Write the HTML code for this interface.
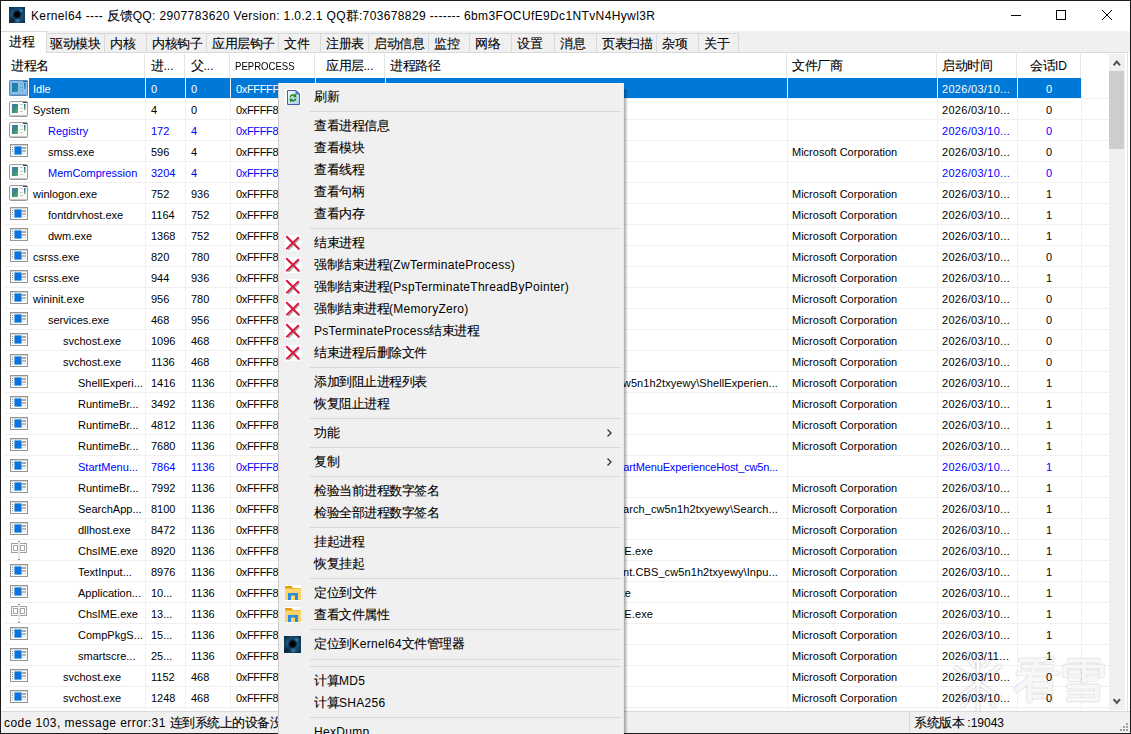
<!DOCTYPE html>
<html><head><meta charset="utf-8"><style>
*{box-sizing:border-box}
html,body{margin:0;padding:0}
body{width:1131px;height:734px;overflow:hidden;position:relative;background:#fff;font-family:"Liberation Sans",sans-serif;color:#000}
.a{position:absolute}
.t{position:absolute;white-space:nowrap;font-size:11px;line-height:21px;height:21px;margin-top:1px}
.hd{position:absolute;white-space:nowrap;font-size:12px;line-height:24px;top:54px}
.tab{position:absolute;white-space:nowrap;font-size:12px;line-height:20px;top:33px;height:20px;background:#f0f0f0;border:1px solid #d9d9d9;border-bottom:none;text-align:center}
.mi{position:absolute;left:314px;white-space:nowrap;font-size:12px;line-height:22px;height:22px}
.cj{font-size:12.5px;letter-spacing:-0.5px;-webkit-text-stroke:0.1px currentColor}
.ms{position:absolute;left:310px;width:311px;height:1px;background:#d7d7d7}
</style></head><body>

<div class="a" style="left:0;top:0;width:1131px;height:734px;border:1px solid #1b1b1b"></div>
<div class="a" style="left:9px;top:7px;width:16px;height:16px;background:radial-gradient(circle at 50% 47%,#000 0,#000 2.2px,rgba(0,0,0,0.6) 3.5px,rgba(0,0,0,0) 5px),radial-gradient(circle at 75% 22%,rgba(80,160,220,0.7) 0,rgba(80,160,220,0) 2.5px),radial-gradient(circle at 30% 40%,rgba(70,140,200,0.5) 0,rgba(70,140,200,0) 3px),radial-gradient(circle at 55% 85%,rgba(80,160,220,0.6) 0,rgba(80,160,220,0) 3px),radial-gradient(circle at 20% 80%,rgba(0,10,25,0.6) 0,rgba(0,10,25,0) 4px),radial-gradient(circle at 50% 50%,#1d5a85 0,#174b70 6px,#0c2c45 11px)"></div>
<div class="a" style="left:31px;top:8px;font-size:12px;line-height:16px;white-space:nowrap;letter-spacing:0.37px">Kernel64 ---- <span class="cj" style="letter-spacing:-0.13px">反馈</span>QQ: 2907783620 Version: 1.0.2.1 QQ<span class="cj" style="letter-spacing:-0.13px">群</span>:703678829 ------- 6bm3FOCUfE9Dc1NTvN4Hywl3R</div>
<div class="a" style="left:1011px;top:15px;width:10px;height:1px;background:#000"></div>
<div class="a" style="left:1056px;top:10px;width:10px;height:10px;border:1px solid #000"></div>
<svg class="a" style="left:1101px;top:9px" width="12" height="12" viewBox="0 0 12 12"><path d="M1 1L11 11M11 1L1 11" stroke="#000" stroke-width="1" fill="none"/></svg>
<div class="a" style="left:1px;top:31px;width:1129px;height:22px;background:#f0f0f0"></div>
<div class="tab" style="left:46px;width:59px;text-align:left;padding-left:3px"><span class="cj">驱动模块</span></div>
<div class="tab" style="left:104px;width:43px;text-align:left;padding-left:5px"><span class="cj">内核</span></div>
<div class="tab" style="left:146px;width:61px;text-align:left;padding-left:5px"><span class="cj">内核钩子</span></div>
<div class="tab" style="left:206px;width:73px;text-align:left;padding-left:5px"><span class="cj">应用层钩子</span></div>
<div class="tab" style="left:278px;width:43px;text-align:left;padding-left:5px"><span class="cj">文件</span></div>
<div class="tab" style="left:320px;width:49px;text-align:left;padding-left:5px"><span class="cj">注册表</span></div>
<div class="tab" style="left:368px;width:61px;text-align:left;padding-left:5px"><span class="cj">启动信息</span></div>
<div class="tab" style="left:428px;width:42px;text-align:left;padding-left:5px"><span class="cj">监控</span></div>
<div class="tab" style="left:469px;width:43px;text-align:left;padding-left:5px"><span class="cj">网络</span></div>
<div class="tab" style="left:511px;width:44px;text-align:left;padding-left:5px"><span class="cj">设置</span></div>
<div class="tab" style="left:554px;width:43px;text-align:left;padding-left:5px"><span class="cj">消息</span></div>
<div class="tab" style="left:596px;width:61px;text-align:left;padding-left:5px"><span class="cj">页表扫描</span></div>
<div class="tab" style="left:656px;width:43px;text-align:left;padding-left:5px"><span class="cj">杂项</span></div>
<div class="tab" style="left:698px;width:41px;text-align:left;padding-left:5px"><span class="cj">关于</span></div>
<div class="a" style="left:1px;top:31px;width:46px;height:23px;background:#fff;border:1px solid #d9d9d9;border-bottom:none;border-left:none"></div>
<div class="a" style="left:9px;top:34px;font-size:12px;line-height:16px"><span class="cj">进程</span></div>
<div class="a" style="left:1px;top:53px;width:1126px;height:658px;background:#fff"></div>
<div class="a" style="left:1127px;top:52px;width:1px;height:659px;background:#e3e3e3"></div>
<div class="a" style="left:47px;top:52px;width:1081px;height:1px;background:#d9d9d9"></div>
<div class="hd" style="left:11px"><span class="cj">进程名</span></div>
<div class="a" style="left:144px;top:54px;width:1px;height:24px;background:#e5e5e5"></div>
<div class="hd" style="left:151px"><span class="cj">进</span>...</div>
<div class="a" style="left:184px;top:54px;width:1px;height:24px;background:#e5e5e5"></div>
<div class="hd" style="left:191px"><span class="cj">父</span>...</div>
<div class="a" style="left:229px;top:54px;width:1px;height:24px;background:#e5e5e5"></div>
<div class="hd" style="left:235px;font-size:11px;transform:scaleX(0.87);transform-origin:0 0">PEPROCESS</div>
<div class="a" style="left:314px;top:54px;width:1px;height:24px;background:#e5e5e5"></div>
<div class="hd" style="left:326px"><span class="cj">应用层</span>...</div>
<div class="a" style="left:384px;top:54px;width:1px;height:24px;background:#e5e5e5"></div>
<div class="hd" style="left:390px"><span class="cj">进程路径</span></div>
<div class="a" style="left:786px;top:54px;width:1px;height:24px;background:#e5e5e5"></div>
<div class="hd" style="left:792px"><span class="cj">文件厂商</span></div>
<div class="a" style="left:936px;top:54px;width:1px;height:24px;background:#e5e5e5"></div>
<div class="hd" style="left:942px"><span class="cj">启动时间</span></div>
<div class="a" style="left:1016px;top:54px;width:1px;height:24px;background:#e5e5e5"></div>
<div class="hd" style="left:1017px;width:63px;text-align:center"><span class="cj">会话</span>ID</div>
<div class="a" style="left:1080px;top:54px;width:1px;height:24px;background:#e5e5e5"></div>
<div class="a" style="left:145px;top:78px;width:1px;height:632px;background:#f0f0f0"></div>
<div class="a" style="left:185px;top:78px;width:1px;height:632px;background:#f0f0f0"></div>
<div class="a" style="left:230px;top:78px;width:1px;height:632px;background:#f0f0f0"></div>
<div class="a" style="left:315px;top:78px;width:1px;height:632px;background:#f0f0f0"></div>
<div class="a" style="left:385px;top:78px;width:1px;height:632px;background:#f0f0f0"></div>
<div class="a" style="left:787px;top:78px;width:1px;height:632px;background:#f0f0f0"></div>
<div class="a" style="left:937px;top:78px;width:1px;height:632px;background:#f0f0f0"></div>
<div class="a" style="left:1017px;top:78px;width:1px;height:632px;background:#f0f0f0"></div>
<div class="a" style="left:1081px;top:78px;width:1px;height:632px;background:#f0f0f0"></div>
<div class="a" style="left:29px;top:78px;width:1052px;height:20px;background:#0078d7"></div>
<div class="a" style="left:145px;top:78px;width:1px;height:20px;background:#f0f0f0"></div>
<div class="a" style="left:185px;top:78px;width:1px;height:20px;background:#f0f0f0"></div>
<div class="a" style="left:230px;top:78px;width:1px;height:20px;background:#f0f0f0"></div>
<div class="a" style="left:315px;top:78px;width:1px;height:20px;background:#f0f0f0"></div>
<div class="a" style="left:385px;top:78px;width:1px;height:20px;background:#f0f0f0"></div>
<div class="a" style="left:787px;top:78px;width:1px;height:20px;background:#f0f0f0"></div>
<div class="a" style="left:937px;top:78px;width:1px;height:20px;background:#f0f0f0"></div>
<div class="a" style="left:1017px;top:78px;width:1px;height:20px;background:#f0f0f0"></div>
<div class="a" style="left:5px;top:98px;width:1104px;height:1px;background:#f0f0f0"></div>
<div class="a" style="left:5px;top:119px;width:1104px;height:1px;background:#f0f0f0"></div>
<div class="a" style="left:5px;top:140px;width:1104px;height:1px;background:#f0f0f0"></div>
<div class="a" style="left:5px;top:161px;width:1104px;height:1px;background:#f0f0f0"></div>
<div class="a" style="left:5px;top:182px;width:1104px;height:1px;background:#f0f0f0"></div>
<div class="a" style="left:5px;top:203px;width:1104px;height:1px;background:#f0f0f0"></div>
<div class="a" style="left:5px;top:224px;width:1104px;height:1px;background:#f0f0f0"></div>
<div class="a" style="left:5px;top:245px;width:1104px;height:1px;background:#f0f0f0"></div>
<div class="a" style="left:5px;top:266px;width:1104px;height:1px;background:#f0f0f0"></div>
<div class="a" style="left:5px;top:287px;width:1104px;height:1px;background:#f0f0f0"></div>
<div class="a" style="left:5px;top:308px;width:1104px;height:1px;background:#f0f0f0"></div>
<div class="a" style="left:5px;top:329px;width:1104px;height:1px;background:#f0f0f0"></div>
<div class="a" style="left:5px;top:350px;width:1104px;height:1px;background:#f0f0f0"></div>
<div class="a" style="left:5px;top:371px;width:1104px;height:1px;background:#f0f0f0"></div>
<div class="a" style="left:5px;top:392px;width:1104px;height:1px;background:#f0f0f0"></div>
<div class="a" style="left:5px;top:413px;width:1104px;height:1px;background:#f0f0f0"></div>
<div class="a" style="left:5px;top:434px;width:1104px;height:1px;background:#f0f0f0"></div>
<div class="a" style="left:5px;top:455px;width:1104px;height:1px;background:#f0f0f0"></div>
<div class="a" style="left:5px;top:476px;width:1104px;height:1px;background:#f0f0f0"></div>
<div class="a" style="left:5px;top:497px;width:1104px;height:1px;background:#f0f0f0"></div>
<div class="a" style="left:5px;top:518px;width:1104px;height:1px;background:#f0f0f0"></div>
<div class="a" style="left:5px;top:539px;width:1104px;height:1px;background:#f0f0f0"></div>
<div class="a" style="left:5px;top:560px;width:1104px;height:1px;background:#f0f0f0"></div>
<div class="a" style="left:5px;top:581px;width:1104px;height:1px;background:#f0f0f0"></div>
<div class="a" style="left:5px;top:602px;width:1104px;height:1px;background:#f0f0f0"></div>
<div class="a" style="left:5px;top:623px;width:1104px;height:1px;background:#f0f0f0"></div>
<div class="a" style="left:5px;top:644px;width:1104px;height:1px;background:#f0f0f0"></div>
<div class="a" style="left:5px;top:665px;width:1104px;height:1px;background:#f0f0f0"></div>
<div class="a" style="left:5px;top:686px;width:1104px;height:1px;background:#f0f0f0"></div>
<div class="a" style="left:5px;top:707px;width:1104px;height:1px;background:#f0f0f0"></div>
<svg width="0" height="0" style="position:absolute"><defs><linearGradient id="gA" x1="0" y1="0" x2="1" y2="1"><stop offset="0" stop-color="#4a78b5"/><stop offset="0.5" stop-color="#3a8a78"/><stop offset="1" stop-color="#5ab866"/></linearGradient><linearGradient id="gB" x1="0" y1="0" x2="0" y2="1"><stop offset="0" stop-color="#2a5cb0"/><stop offset="1" stop-color="#6ac46a"/></linearGradient></defs></svg>
<div class="a" style="left:1014px;top:652px;font-size:47px;font-weight:bold;line-height:56px;color:rgba(255,255,255,0.92);text-shadow:0 0 1.5px rgba(0,0,0,0.32);white-space:nowrap;letter-spacing:-2px">看雪</div>
<svg class="a" style="left:948px;top:648px;filter:drop-shadow(0 0 1px rgba(0,0,0,0.32))" width="62" height="68" viewBox="0 0 62 68"><g stroke="rgba(255,255,255,0.92)" stroke-width="3" stroke-linecap="round" fill="none"><path d="M30 6V62"/><path d="M8 20L52 50"/><path d="M52 18L10 50"/><path d="M18 8L26 18M44 8L36 18M14 58L24 48M46 58L38 48"/></g></svg>
<svg class="a" style="left:9px;top:80px" width="19" height="16" viewBox="0 0 19 16"><rect x="0.5" y="0.5" width="18" height="15" rx="1.2" fill="#fafafa" stroke="#9a9a9a"/><rect x="1" y="14" width="17" height="1" fill="#c8c8c8"/><rect x="3" y="3" width="6" height="9" fill="url(#gA)"/><rect x="11" y="3" width="3" height="1" fill="#c8c8c8"/><rect x="11" y="7" width="3" height="1" fill="#c8c8c8"/><rect x="11" y="10" width="3" height="1" fill="#c8c8c8"/><rect x="15" y="3" width="1.5" height="6" fill="url(#gB)"/><rect x="14" y="1" width="4" height="1" fill="#444"/><rect x="0" y="0" width="19" height="16" rx="1.2" fill="#0078d7" opacity="0.45"/></svg>
<div class="t" style="top:78px;left:33px;color:#fff">Idle</div>
<div class="t" style="top:78px;left:151px;color:#fff">0</div>
<div class="t" style="top:78px;left:191px;color:#fff">0</div>
<div class="t" style="top:78px;left:236px;color:#fff;letter-spacing:-0.35px">0xFFFFF80123456</div>
<div class="t" style="top:78px;left:942px;color:#fff;letter-spacing:0.3px">2026/03/10...</div>
<div class="t" style="top:78px;left:1017px;width:64px;text-align:center;color:#fff">0</div>
<svg class="a" style="left:9px;top:101px" width="19" height="16" viewBox="0 0 19 16"><rect x="0.5" y="0.5" width="18" height="15" rx="1.2" fill="#fafafa" stroke="#9a9a9a"/><rect x="1" y="14" width="17" height="1" fill="#c8c8c8"/><rect x="3" y="3" width="6" height="9" fill="url(#gA)"/><rect x="11" y="3" width="3" height="1" fill="#c8c8c8"/><rect x="11" y="7" width="3" height="1" fill="#c8c8c8"/><rect x="11" y="10" width="3" height="1" fill="#c8c8c8"/><rect x="15" y="3" width="1.5" height="6" fill="url(#gB)"/><rect x="14" y="1" width="4" height="1" fill="#444"/></svg>
<div class="t" style="top:99px;left:33px;color:#000">System</div>
<div class="t" style="top:99px;left:151px;color:#000">4</div>
<div class="t" style="top:99px;left:191px;color:#000">0</div>
<div class="t" style="top:99px;left:236px;color:#000;letter-spacing:-0.35px">0xFFFF8C0A1E2B4080</div>
<div class="t" style="top:99px;left:942px;color:#000;letter-spacing:0.3px">2026/03/10...</div>
<div class="t" style="top:99px;left:1017px;width:64px;text-align:center;color:#000">0</div>
<svg class="a" style="left:9px;top:122px" width="19" height="16" viewBox="0 0 19 16"><rect x="0.5" y="0.5" width="18" height="15" rx="1.2" fill="#fafafa" stroke="#9a9a9a"/><rect x="1" y="14" width="17" height="1" fill="#c8c8c8"/><rect x="3" y="3" width="6" height="9" fill="url(#gA)"/><rect x="11" y="3" width="3" height="1" fill="#c8c8c8"/><rect x="11" y="7" width="3" height="1" fill="#c8c8c8"/><rect x="11" y="10" width="3" height="1" fill="#c8c8c8"/><rect x="15" y="3" width="1.5" height="6" fill="url(#gB)"/><rect x="14" y="1" width="4" height="1" fill="#444"/></svg>
<div class="t" style="top:120px;left:48px;color:#0000ff">Registry</div>
<div class="t" style="top:120px;left:151px;color:#0000ff">172</div>
<div class="t" style="top:120px;left:191px;color:#0000ff">4</div>
<div class="t" style="top:120px;left:236px;color:#0000ff;letter-spacing:-0.35px">0xFFFF8C0A1E2B4080</div>
<div class="t" style="top:120px;left:942px;color:#0000ff;letter-spacing:0.3px">2026/03/10...</div>
<div class="t" style="top:120px;left:1017px;width:64px;text-align:center;color:#0000ff">0</div>
<svg class="a" style="left:10px;top:144px" width="18" height="13" viewBox="0 0 18 13"><rect x="0.5" y="0.5" width="17" height="12" fill="#fbfbfb" stroke="#959595"/><rect x="1" y="1" width="16" height="1" fill="#d8d8d8"/><rect x="4.5" y="2.5" width="7" height="8" rx="0.5" fill="#0b74da" stroke="#5aa6ee" stroke-width="0.6"/><rect x="2" y="3" width="1" height="1" fill="#8a8a8a"/><rect x="2" y="5" width="1" height="1" fill="#8a8a8a"/><rect x="2" y="7" width="1" height="1" fill="#8a8a8a"/><rect x="2" y="9" width="1" height="1" fill="#c0c0c0"/><rect x="12" y="3" width="4" height="2" fill="#a8a8a8"/><rect x="12" y="6" width="4" height="2" fill="#b8b8b8"/><rect x="12" y="9" width="4" height="1" fill="#e0e0e0"/></svg>
<div class="t" style="top:141px;left:48px;color:#000">smss.exe</div>
<div class="t" style="top:141px;left:151px;color:#000">596</div>
<div class="t" style="top:141px;left:191px;color:#000">4</div>
<div class="t" style="top:141px;left:236px;color:#000;letter-spacing:-0.35px">0xFFFF8C0A1E2B4080</div>
<div class="t" style="top:141px;left:792px;color:#000">Microsoft Corporation</div>
<div class="t" style="top:141px;left:942px;color:#000;letter-spacing:0.3px">2026/03/10...</div>
<div class="t" style="top:141px;left:1017px;width:64px;text-align:center;color:#000">0</div>
<svg class="a" style="left:9px;top:164px" width="19" height="16" viewBox="0 0 19 16"><rect x="0.5" y="0.5" width="18" height="15" rx="1.2" fill="#fafafa" stroke="#9a9a9a"/><rect x="1" y="14" width="17" height="1" fill="#c8c8c8"/><rect x="3" y="3" width="6" height="9" fill="url(#gA)"/><rect x="11" y="3" width="3" height="1" fill="#c8c8c8"/><rect x="11" y="7" width="3" height="1" fill="#c8c8c8"/><rect x="11" y="10" width="3" height="1" fill="#c8c8c8"/><rect x="15" y="3" width="1.5" height="6" fill="url(#gB)"/><rect x="14" y="1" width="4" height="1" fill="#444"/></svg>
<div class="t" style="top:162px;left:48px;color:#0000ff">MemCompression</div>
<div class="t" style="top:162px;left:151px;color:#0000ff">3204</div>
<div class="t" style="top:162px;left:191px;color:#0000ff">4</div>
<div class="t" style="top:162px;left:236px;color:#0000ff;letter-spacing:-0.35px">0xFFFF8C0A1E2B4080</div>
<div class="t" style="top:162px;left:942px;color:#0000ff;letter-spacing:0.3px">2026/03/10...</div>
<div class="t" style="top:162px;left:1017px;width:64px;text-align:center;color:#0000ff">0</div>
<svg class="a" style="left:9px;top:185px" width="19" height="16" viewBox="0 0 19 16"><rect x="0.5" y="0.5" width="18" height="15" rx="1.2" fill="#fafafa" stroke="#9a9a9a"/><rect x="1" y="14" width="17" height="1" fill="#c8c8c8"/><rect x="3" y="3" width="6" height="9" fill="url(#gA)"/><rect x="11" y="3" width="3" height="1" fill="#c8c8c8"/><rect x="11" y="7" width="3" height="1" fill="#c8c8c8"/><rect x="11" y="10" width="3" height="1" fill="#c8c8c8"/><rect x="15" y="3" width="1.5" height="6" fill="url(#gB)"/><rect x="14" y="1" width="4" height="1" fill="#444"/></svg>
<div class="t" style="top:183px;left:33px;color:#000">winlogon.exe</div>
<div class="t" style="top:183px;left:151px;color:#000">752</div>
<div class="t" style="top:183px;left:191px;color:#000">936</div>
<div class="t" style="top:183px;left:236px;color:#000;letter-spacing:-0.35px">0xFFFF8C0A1E2B4080</div>
<div class="t" style="top:183px;left:792px;color:#000">Microsoft Corporation</div>
<div class="t" style="top:183px;left:942px;color:#000;letter-spacing:0.3px">2026/03/10...</div>
<div class="t" style="top:183px;left:1017px;width:64px;text-align:center;color:#000">1</div>
<svg class="a" style="left:10px;top:207px" width="18" height="13" viewBox="0 0 18 13"><rect x="0.5" y="0.5" width="17" height="12" fill="#fbfbfb" stroke="#959595"/><rect x="1" y="1" width="16" height="1" fill="#d8d8d8"/><rect x="4.5" y="2.5" width="7" height="8" rx="0.5" fill="#0b74da" stroke="#5aa6ee" stroke-width="0.6"/><rect x="2" y="3" width="1" height="1" fill="#8a8a8a"/><rect x="2" y="5" width="1" height="1" fill="#8a8a8a"/><rect x="2" y="7" width="1" height="1" fill="#8a8a8a"/><rect x="2" y="9" width="1" height="1" fill="#c0c0c0"/><rect x="12" y="3" width="4" height="2" fill="#a8a8a8"/><rect x="12" y="6" width="4" height="2" fill="#b8b8b8"/><rect x="12" y="9" width="4" height="1" fill="#e0e0e0"/></svg>
<div class="t" style="top:204px;left:48px;color:#000">fontdrvhost.exe</div>
<div class="t" style="top:204px;left:151px;color:#000">1164</div>
<div class="t" style="top:204px;left:191px;color:#000">752</div>
<div class="t" style="top:204px;left:236px;color:#000;letter-spacing:-0.35px">0xFFFF8C0A1E2B4080</div>
<div class="t" style="top:204px;left:792px;color:#000">Microsoft Corporation</div>
<div class="t" style="top:204px;left:942px;color:#000;letter-spacing:0.3px">2026/03/10...</div>
<div class="t" style="top:204px;left:1017px;width:64px;text-align:center;color:#000">1</div>
<svg class="a" style="left:10px;top:228px" width="18" height="13" viewBox="0 0 18 13"><rect x="0.5" y="0.5" width="17" height="12" fill="#fbfbfb" stroke="#959595"/><rect x="1" y="1" width="16" height="1" fill="#d8d8d8"/><rect x="4.5" y="2.5" width="7" height="8" rx="0.5" fill="#0b74da" stroke="#5aa6ee" stroke-width="0.6"/><rect x="2" y="3" width="1" height="1" fill="#8a8a8a"/><rect x="2" y="5" width="1" height="1" fill="#8a8a8a"/><rect x="2" y="7" width="1" height="1" fill="#8a8a8a"/><rect x="2" y="9" width="1" height="1" fill="#c0c0c0"/><rect x="12" y="3" width="4" height="2" fill="#a8a8a8"/><rect x="12" y="6" width="4" height="2" fill="#b8b8b8"/><rect x="12" y="9" width="4" height="1" fill="#e0e0e0"/></svg>
<div class="t" style="top:225px;left:48px;color:#000">dwm.exe</div>
<div class="t" style="top:225px;left:151px;color:#000">1368</div>
<div class="t" style="top:225px;left:191px;color:#000">752</div>
<div class="t" style="top:225px;left:236px;color:#000;letter-spacing:-0.35px">0xFFFF8C0A1E2B4080</div>
<div class="t" style="top:225px;left:792px;color:#000">Microsoft Corporation</div>
<div class="t" style="top:225px;left:942px;color:#000;letter-spacing:0.3px">2026/03/10...</div>
<div class="t" style="top:225px;left:1017px;width:64px;text-align:center;color:#000">1</div>
<svg class="a" style="left:10px;top:249px" width="18" height="13" viewBox="0 0 18 13"><rect x="0.5" y="0.5" width="17" height="12" fill="#fbfbfb" stroke="#959595"/><rect x="1" y="1" width="16" height="1" fill="#d8d8d8"/><rect x="4.5" y="2.5" width="7" height="8" rx="0.5" fill="#0b74da" stroke="#5aa6ee" stroke-width="0.6"/><rect x="2" y="3" width="1" height="1" fill="#8a8a8a"/><rect x="2" y="5" width="1" height="1" fill="#8a8a8a"/><rect x="2" y="7" width="1" height="1" fill="#8a8a8a"/><rect x="2" y="9" width="1" height="1" fill="#c0c0c0"/><rect x="12" y="3" width="4" height="2" fill="#a8a8a8"/><rect x="12" y="6" width="4" height="2" fill="#b8b8b8"/><rect x="12" y="9" width="4" height="1" fill="#e0e0e0"/></svg>
<div class="t" style="top:246px;left:33px;color:#000">csrss.exe</div>
<div class="t" style="top:246px;left:151px;color:#000">820</div>
<div class="t" style="top:246px;left:191px;color:#000">780</div>
<div class="t" style="top:246px;left:236px;color:#000;letter-spacing:-0.35px">0xFFFF8C0A1E2B4080</div>
<div class="t" style="top:246px;left:792px;color:#000">Microsoft Corporation</div>
<div class="t" style="top:246px;left:942px;color:#000;letter-spacing:0.3px">2026/03/10...</div>
<div class="t" style="top:246px;left:1017px;width:64px;text-align:center;color:#000">0</div>
<svg class="a" style="left:10px;top:270px" width="18" height="13" viewBox="0 0 18 13"><rect x="0.5" y="0.5" width="17" height="12" fill="#fbfbfb" stroke="#959595"/><rect x="1" y="1" width="16" height="1" fill="#d8d8d8"/><rect x="4.5" y="2.5" width="7" height="8" rx="0.5" fill="#0b74da" stroke="#5aa6ee" stroke-width="0.6"/><rect x="2" y="3" width="1" height="1" fill="#8a8a8a"/><rect x="2" y="5" width="1" height="1" fill="#8a8a8a"/><rect x="2" y="7" width="1" height="1" fill="#8a8a8a"/><rect x="2" y="9" width="1" height="1" fill="#c0c0c0"/><rect x="12" y="3" width="4" height="2" fill="#a8a8a8"/><rect x="12" y="6" width="4" height="2" fill="#b8b8b8"/><rect x="12" y="9" width="4" height="1" fill="#e0e0e0"/></svg>
<div class="t" style="top:267px;left:33px;color:#000">csrss.exe</div>
<div class="t" style="top:267px;left:151px;color:#000">944</div>
<div class="t" style="top:267px;left:191px;color:#000">936</div>
<div class="t" style="top:267px;left:236px;color:#000;letter-spacing:-0.35px">0xFFFF8C0A1E2B4080</div>
<div class="t" style="top:267px;left:792px;color:#000">Microsoft Corporation</div>
<div class="t" style="top:267px;left:942px;color:#000;letter-spacing:0.3px">2026/03/10...</div>
<div class="t" style="top:267px;left:1017px;width:64px;text-align:center;color:#000">1</div>
<svg class="a" style="left:10px;top:291px" width="18" height="13" viewBox="0 0 18 13"><rect x="0.5" y="0.5" width="17" height="12" fill="#fbfbfb" stroke="#959595"/><rect x="1" y="1" width="16" height="1" fill="#d8d8d8"/><rect x="4.5" y="2.5" width="7" height="8" rx="0.5" fill="#0b74da" stroke="#5aa6ee" stroke-width="0.6"/><rect x="2" y="3" width="1" height="1" fill="#8a8a8a"/><rect x="2" y="5" width="1" height="1" fill="#8a8a8a"/><rect x="2" y="7" width="1" height="1" fill="#8a8a8a"/><rect x="2" y="9" width="1" height="1" fill="#c0c0c0"/><rect x="12" y="3" width="4" height="2" fill="#a8a8a8"/><rect x="12" y="6" width="4" height="2" fill="#b8b8b8"/><rect x="12" y="9" width="4" height="1" fill="#e0e0e0"/></svg>
<div class="t" style="top:288px;left:33px;color:#000">wininit.exe</div>
<div class="t" style="top:288px;left:151px;color:#000">956</div>
<div class="t" style="top:288px;left:191px;color:#000">780</div>
<div class="t" style="top:288px;left:236px;color:#000;letter-spacing:-0.35px">0xFFFF8C0A1E2B4080</div>
<div class="t" style="top:288px;left:792px;color:#000">Microsoft Corporation</div>
<div class="t" style="top:288px;left:942px;color:#000;letter-spacing:0.3px">2026/03/10...</div>
<div class="t" style="top:288px;left:1017px;width:64px;text-align:center;color:#000">0</div>
<svg class="a" style="left:10px;top:312px" width="18" height="13" viewBox="0 0 18 13"><rect x="0.5" y="0.5" width="17" height="12" fill="#fbfbfb" stroke="#959595"/><rect x="1" y="1" width="16" height="1" fill="#d8d8d8"/><rect x="4.5" y="2.5" width="7" height="8" rx="0.5" fill="#0b74da" stroke="#5aa6ee" stroke-width="0.6"/><rect x="2" y="3" width="1" height="1" fill="#8a8a8a"/><rect x="2" y="5" width="1" height="1" fill="#8a8a8a"/><rect x="2" y="7" width="1" height="1" fill="#8a8a8a"/><rect x="2" y="9" width="1" height="1" fill="#c0c0c0"/><rect x="12" y="3" width="4" height="2" fill="#a8a8a8"/><rect x="12" y="6" width="4" height="2" fill="#b8b8b8"/><rect x="12" y="9" width="4" height="1" fill="#e0e0e0"/></svg>
<div class="t" style="top:309px;left:48px;color:#000">services.exe</div>
<div class="t" style="top:309px;left:151px;color:#000">468</div>
<div class="t" style="top:309px;left:191px;color:#000">956</div>
<div class="t" style="top:309px;left:236px;color:#000;letter-spacing:-0.35px">0xFFFF8C0A1E2B4080</div>
<div class="t" style="top:309px;left:792px;color:#000">Microsoft Corporation</div>
<div class="t" style="top:309px;left:942px;color:#000;letter-spacing:0.3px">2026/03/10...</div>
<div class="t" style="top:309px;left:1017px;width:64px;text-align:center;color:#000">0</div>
<svg class="a" style="left:10px;top:333px" width="18" height="13" viewBox="0 0 18 13"><rect x="0.5" y="0.5" width="17" height="12" fill="#fbfbfb" stroke="#959595"/><rect x="1" y="1" width="16" height="1" fill="#d8d8d8"/><rect x="4.5" y="2.5" width="7" height="8" rx="0.5" fill="#0b74da" stroke="#5aa6ee" stroke-width="0.6"/><rect x="2" y="3" width="1" height="1" fill="#8a8a8a"/><rect x="2" y="5" width="1" height="1" fill="#8a8a8a"/><rect x="2" y="7" width="1" height="1" fill="#8a8a8a"/><rect x="2" y="9" width="1" height="1" fill="#c0c0c0"/><rect x="12" y="3" width="4" height="2" fill="#a8a8a8"/><rect x="12" y="6" width="4" height="2" fill="#b8b8b8"/><rect x="12" y="9" width="4" height="1" fill="#e0e0e0"/></svg>
<div class="t" style="top:330px;left:63px;color:#000">svchost.exe</div>
<div class="t" style="top:330px;left:151px;color:#000">1096</div>
<div class="t" style="top:330px;left:191px;color:#000">468</div>
<div class="t" style="top:330px;left:236px;color:#000;letter-spacing:-0.35px">0xFFFF8C0A1E2B4080</div>
<div class="t" style="top:330px;left:792px;color:#000">Microsoft Corporation</div>
<div class="t" style="top:330px;left:942px;color:#000;letter-spacing:0.3px">2026/03/10...</div>
<div class="t" style="top:330px;left:1017px;width:64px;text-align:center;color:#000">0</div>
<svg class="a" style="left:10px;top:354px" width="18" height="13" viewBox="0 0 18 13"><rect x="0.5" y="0.5" width="17" height="12" fill="#fbfbfb" stroke="#959595"/><rect x="1" y="1" width="16" height="1" fill="#d8d8d8"/><rect x="4.5" y="2.5" width="7" height="8" rx="0.5" fill="#0b74da" stroke="#5aa6ee" stroke-width="0.6"/><rect x="2" y="3" width="1" height="1" fill="#8a8a8a"/><rect x="2" y="5" width="1" height="1" fill="#8a8a8a"/><rect x="2" y="7" width="1" height="1" fill="#8a8a8a"/><rect x="2" y="9" width="1" height="1" fill="#c0c0c0"/><rect x="12" y="3" width="4" height="2" fill="#a8a8a8"/><rect x="12" y="6" width="4" height="2" fill="#b8b8b8"/><rect x="12" y="9" width="4" height="1" fill="#e0e0e0"/></svg>
<div class="t" style="top:351px;left:63px;color:#000">svchost.exe</div>
<div class="t" style="top:351px;left:151px;color:#000">1136</div>
<div class="t" style="top:351px;left:191px;color:#000">468</div>
<div class="t" style="top:351px;left:236px;color:#000;letter-spacing:-0.35px">0xFFFF8C0A1E2B4080</div>
<div class="t" style="top:351px;left:792px;color:#000">Microsoft Corporation</div>
<div class="t" style="top:351px;left:942px;color:#000;letter-spacing:0.3px">2026/03/10...</div>
<div class="t" style="top:351px;left:1017px;width:64px;text-align:center;color:#000">0</div>
<svg class="a" style="left:10px;top:375px" width="18" height="13" viewBox="0 0 18 13"><rect x="0.5" y="0.5" width="17" height="12" fill="#fbfbfb" stroke="#959595"/><rect x="1" y="1" width="16" height="1" fill="#d8d8d8"/><rect x="4.5" y="2.5" width="7" height="8" rx="0.5" fill="#0b74da" stroke="#5aa6ee" stroke-width="0.6"/><rect x="2" y="3" width="1" height="1" fill="#8a8a8a"/><rect x="2" y="5" width="1" height="1" fill="#8a8a8a"/><rect x="2" y="7" width="1" height="1" fill="#8a8a8a"/><rect x="2" y="9" width="1" height="1" fill="#c0c0c0"/><rect x="12" y="3" width="4" height="2" fill="#a8a8a8"/><rect x="12" y="6" width="4" height="2" fill="#b8b8b8"/><rect x="12" y="9" width="4" height="1" fill="#e0e0e0"/></svg>
<div class="t" style="top:372px;left:78px;color:#000">ShellExperi...</div>
<div class="t" style="top:372px;left:151px;color:#000">1416</div>
<div class="t" style="top:372px;left:191px;color:#000">1136</div>
<div class="t" style="top:372px;left:236px;color:#000;letter-spacing:-0.35px">0xFFFF8C0A1E2B4080</div>
<div class="t" style="top:372px;right:353px;color:#000;text-align:right;letter-spacing:0.1px">Microsoft.Windows.ShellExperienceHost_cw5n1h2txyewy\ShellExperien...</div>
<div class="t" style="top:372px;left:792px;color:#000">Microsoft Corporation</div>
<div class="t" style="top:372px;left:942px;color:#000;letter-spacing:0.3px">2026/03/10...</div>
<div class="t" style="top:372px;left:1017px;width:64px;text-align:center;color:#000">1</div>
<svg class="a" style="left:10px;top:396px" width="18" height="13" viewBox="0 0 18 13"><rect x="0.5" y="0.5" width="17" height="12" fill="#fbfbfb" stroke="#959595"/><rect x="1" y="1" width="16" height="1" fill="#d8d8d8"/><rect x="4.5" y="2.5" width="7" height="8" rx="0.5" fill="#0b74da" stroke="#5aa6ee" stroke-width="0.6"/><rect x="2" y="3" width="1" height="1" fill="#8a8a8a"/><rect x="2" y="5" width="1" height="1" fill="#8a8a8a"/><rect x="2" y="7" width="1" height="1" fill="#8a8a8a"/><rect x="2" y="9" width="1" height="1" fill="#c0c0c0"/><rect x="12" y="3" width="4" height="2" fill="#a8a8a8"/><rect x="12" y="6" width="4" height="2" fill="#b8b8b8"/><rect x="12" y="9" width="4" height="1" fill="#e0e0e0"/></svg>
<div class="t" style="top:393px;left:78px;color:#000">RuntimeBr...</div>
<div class="t" style="top:393px;left:151px;color:#000">3492</div>
<div class="t" style="top:393px;left:191px;color:#000">1136</div>
<div class="t" style="top:393px;left:236px;color:#000;letter-spacing:-0.35px">0xFFFF8C0A1E2B4080</div>
<div class="t" style="top:393px;left:792px;color:#000">Microsoft Corporation</div>
<div class="t" style="top:393px;left:942px;color:#000;letter-spacing:0.3px">2026/03/10...</div>
<div class="t" style="top:393px;left:1017px;width:64px;text-align:center;color:#000">1</div>
<svg class="a" style="left:10px;top:417px" width="18" height="13" viewBox="0 0 18 13"><rect x="0.5" y="0.5" width="17" height="12" fill="#fbfbfb" stroke="#959595"/><rect x="1" y="1" width="16" height="1" fill="#d8d8d8"/><rect x="4.5" y="2.5" width="7" height="8" rx="0.5" fill="#0b74da" stroke="#5aa6ee" stroke-width="0.6"/><rect x="2" y="3" width="1" height="1" fill="#8a8a8a"/><rect x="2" y="5" width="1" height="1" fill="#8a8a8a"/><rect x="2" y="7" width="1" height="1" fill="#8a8a8a"/><rect x="2" y="9" width="1" height="1" fill="#c0c0c0"/><rect x="12" y="3" width="4" height="2" fill="#a8a8a8"/><rect x="12" y="6" width="4" height="2" fill="#b8b8b8"/><rect x="12" y="9" width="4" height="1" fill="#e0e0e0"/></svg>
<div class="t" style="top:414px;left:78px;color:#000">RuntimeBr...</div>
<div class="t" style="top:414px;left:151px;color:#000">4812</div>
<div class="t" style="top:414px;left:191px;color:#000">1136</div>
<div class="t" style="top:414px;left:236px;color:#000;letter-spacing:-0.35px">0xFFFF8C0A1E2B4080</div>
<div class="t" style="top:414px;left:792px;color:#000">Microsoft Corporation</div>
<div class="t" style="top:414px;left:942px;color:#000;letter-spacing:0.3px">2026/03/10...</div>
<div class="t" style="top:414px;left:1017px;width:64px;text-align:center;color:#000">1</div>
<svg class="a" style="left:10px;top:438px" width="18" height="13" viewBox="0 0 18 13"><rect x="0.5" y="0.5" width="17" height="12" fill="#fbfbfb" stroke="#959595"/><rect x="1" y="1" width="16" height="1" fill="#d8d8d8"/><rect x="4.5" y="2.5" width="7" height="8" rx="0.5" fill="#0b74da" stroke="#5aa6ee" stroke-width="0.6"/><rect x="2" y="3" width="1" height="1" fill="#8a8a8a"/><rect x="2" y="5" width="1" height="1" fill="#8a8a8a"/><rect x="2" y="7" width="1" height="1" fill="#8a8a8a"/><rect x="2" y="9" width="1" height="1" fill="#c0c0c0"/><rect x="12" y="3" width="4" height="2" fill="#a8a8a8"/><rect x="12" y="6" width="4" height="2" fill="#b8b8b8"/><rect x="12" y="9" width="4" height="1" fill="#e0e0e0"/></svg>
<div class="t" style="top:435px;left:78px;color:#000">RuntimeBr...</div>
<div class="t" style="top:435px;left:151px;color:#000">7680</div>
<div class="t" style="top:435px;left:191px;color:#000">1136</div>
<div class="t" style="top:435px;left:236px;color:#000;letter-spacing:-0.35px">0xFFFF8C0A1E2B4080</div>
<div class="t" style="top:435px;left:792px;color:#000">Microsoft Corporation</div>
<div class="t" style="top:435px;left:942px;color:#000;letter-spacing:0.3px">2026/03/10...</div>
<div class="t" style="top:435px;left:1017px;width:64px;text-align:center;color:#000">1</div>
<svg class="a" style="left:10px;top:459px" width="18" height="13" viewBox="0 0 18 13"><rect x="0.5" y="0.5" width="17" height="12" fill="#fbfbfb" stroke="#959595"/><rect x="1" y="1" width="16" height="1" fill="#d8d8d8"/><rect x="4.5" y="2.5" width="7" height="8" rx="0.5" fill="#0b74da" stroke="#5aa6ee" stroke-width="0.6"/><rect x="2" y="3" width="1" height="1" fill="#8a8a8a"/><rect x="2" y="5" width="1" height="1" fill="#8a8a8a"/><rect x="2" y="7" width="1" height="1" fill="#8a8a8a"/><rect x="2" y="9" width="1" height="1" fill="#c0c0c0"/><rect x="12" y="3" width="4" height="2" fill="#a8a8a8"/><rect x="12" y="6" width="4" height="2" fill="#b8b8b8"/><rect x="12" y="9" width="4" height="1" fill="#e0e0e0"/></svg>
<div class="t" style="top:456px;left:78px;color:#0000ff">StartMenu...</div>
<div class="t" style="top:456px;left:151px;color:#0000ff">7864</div>
<div class="t" style="top:456px;left:191px;color:#0000ff">1136</div>
<div class="t" style="top:456px;left:236px;color:#0000ff;letter-spacing:-0.35px">0xFFFF8C0A1E2B4080</div>
<div class="t" style="top:456px;right:353px;color:#0000ff;text-align:right;letter-spacing:-0.15px">Microsoft.Windows.StartMenuExperienceHost_cw5n...</div>
<div class="t" style="top:456px;left:942px;color:#0000ff;letter-spacing:0.3px">2026/03/10...</div>
<div class="t" style="top:456px;left:1017px;width:64px;text-align:center;color:#0000ff">1</div>
<svg class="a" style="left:10px;top:480px" width="18" height="13" viewBox="0 0 18 13"><rect x="0.5" y="0.5" width="17" height="12" fill="#fbfbfb" stroke="#959595"/><rect x="1" y="1" width="16" height="1" fill="#d8d8d8"/><rect x="4.5" y="2.5" width="7" height="8" rx="0.5" fill="#0b74da" stroke="#5aa6ee" stroke-width="0.6"/><rect x="2" y="3" width="1" height="1" fill="#8a8a8a"/><rect x="2" y="5" width="1" height="1" fill="#8a8a8a"/><rect x="2" y="7" width="1" height="1" fill="#8a8a8a"/><rect x="2" y="9" width="1" height="1" fill="#c0c0c0"/><rect x="12" y="3" width="4" height="2" fill="#a8a8a8"/><rect x="12" y="6" width="4" height="2" fill="#b8b8b8"/><rect x="12" y="9" width="4" height="1" fill="#e0e0e0"/></svg>
<div class="t" style="top:477px;left:78px;color:#000">RuntimeBr...</div>
<div class="t" style="top:477px;left:151px;color:#000">7992</div>
<div class="t" style="top:477px;left:191px;color:#000">1136</div>
<div class="t" style="top:477px;left:236px;color:#000;letter-spacing:-0.35px">0xFFFF8C0A1E2B4080</div>
<div class="t" style="top:477px;left:792px;color:#000">Microsoft Corporation</div>
<div class="t" style="top:477px;left:942px;color:#000;letter-spacing:0.3px">2026/03/10...</div>
<div class="t" style="top:477px;left:1017px;width:64px;text-align:center;color:#000">1</div>
<svg class="a" style="left:10px;top:501px" width="18" height="13" viewBox="0 0 18 13"><rect x="0.5" y="0.5" width="17" height="12" fill="#fbfbfb" stroke="#959595"/><rect x="1" y="1" width="16" height="1" fill="#d8d8d8"/><rect x="4.5" y="2.5" width="7" height="8" rx="0.5" fill="#0b74da" stroke="#5aa6ee" stroke-width="0.6"/><rect x="2" y="3" width="1" height="1" fill="#8a8a8a"/><rect x="2" y="5" width="1" height="1" fill="#8a8a8a"/><rect x="2" y="7" width="1" height="1" fill="#8a8a8a"/><rect x="2" y="9" width="1" height="1" fill="#c0c0c0"/><rect x="12" y="3" width="4" height="2" fill="#a8a8a8"/><rect x="12" y="6" width="4" height="2" fill="#b8b8b8"/><rect x="12" y="9" width="4" height="1" fill="#e0e0e0"/></svg>
<div class="t" style="top:498px;left:78px;color:#000">SearchApp...</div>
<div class="t" style="top:498px;left:151px;color:#000">8100</div>
<div class="t" style="top:498px;left:191px;color:#000">1136</div>
<div class="t" style="top:498px;left:236px;color:#000;letter-spacing:-0.35px">0xFFFF8C0A1E2B4080</div>
<div class="t" style="top:498px;right:353px;color:#000;text-align:right;letter-spacing:0.1px">Microsoft.Windows.Search_cw5n1h2txyewy\Search...</div>
<div class="t" style="top:498px;left:792px;color:#000">Microsoft Corporation</div>
<div class="t" style="top:498px;left:942px;color:#000;letter-spacing:0.3px">2026/03/10...</div>
<div class="t" style="top:498px;left:1017px;width:64px;text-align:center;color:#000">1</div>
<svg class="a" style="left:10px;top:522px" width="18" height="13" viewBox="0 0 18 13"><rect x="0.5" y="0.5" width="17" height="12" fill="#fbfbfb" stroke="#959595"/><rect x="1" y="1" width="16" height="1" fill="#d8d8d8"/><rect x="4.5" y="2.5" width="7" height="8" rx="0.5" fill="#0b74da" stroke="#5aa6ee" stroke-width="0.6"/><rect x="2" y="3" width="1" height="1" fill="#8a8a8a"/><rect x="2" y="5" width="1" height="1" fill="#8a8a8a"/><rect x="2" y="7" width="1" height="1" fill="#8a8a8a"/><rect x="2" y="9" width="1" height="1" fill="#c0c0c0"/><rect x="12" y="3" width="4" height="2" fill="#a8a8a8"/><rect x="12" y="6" width="4" height="2" fill="#b8b8b8"/><rect x="12" y="9" width="4" height="1" fill="#e0e0e0"/></svg>
<div class="t" style="top:519px;left:78px;color:#000">dllhost.exe</div>
<div class="t" style="top:519px;left:151px;color:#000">8472</div>
<div class="t" style="top:519px;left:191px;color:#000">1136</div>
<div class="t" style="top:519px;left:236px;color:#000;letter-spacing:-0.35px">0xFFFF8C0A1E2B4080</div>
<div class="t" style="top:519px;left:792px;color:#000">Microsoft Corporation</div>
<div class="t" style="top:519px;left:942px;color:#000;letter-spacing:0.3px">2026/03/10...</div>
<div class="t" style="top:519px;left:1017px;width:64px;text-align:center;color:#000">1</div>
<svg class="a" style="left:10px;top:540px" width="18" height="21" viewBox="0 0 18 21"><rect x="1.5" y="3.5" width="15" height="9" fill="none" stroke="#a0a0a0"/><rect x="3.5" y="5.5" width="4" height="5" fill="none" stroke="#a8a8a8"/><rect x="10.5" y="5.5" width="4" height="5" fill="none" stroke="#a8a8a8"/><rect x="8" y="1" width="2" height="19" fill="#fff"/><rect x="8.5" y="2" width="1" height="17" fill="#d0d0d0"/><rect x="8" y="1" width="2" height="1" fill="#909090"/><rect x="8" y="19" width="2" height="1" fill="#909090"/></svg>
<div class="t" style="top:540px;left:78px;color:#000">ChsIME.exe</div>
<div class="t" style="top:540px;left:151px;color:#000">8920</div>
<div class="t" style="top:540px;left:191px;color:#000">1136</div>
<div class="t" style="top:540px;left:236px;color:#000;letter-spacing:-0.35px">0xFFFF8C0A1E2B4080</div>
<div class="t" style="top:540px;right:478px;color:#000;text-align:right;letter-spacing:0.1px">C:\Windows\System32\InputMethod\CHS\ChsIME.exe</div>
<div class="t" style="top:540px;left:792px;color:#000">Microsoft Corporation</div>
<div class="t" style="top:540px;left:942px;color:#000;letter-spacing:0.3px">2026/03/10...</div>
<div class="t" style="top:540px;left:1017px;width:64px;text-align:center;color:#000">1</div>
<svg class="a" style="left:10px;top:564px" width="18" height="13" viewBox="0 0 18 13"><rect x="0.5" y="0.5" width="17" height="12" fill="#fbfbfb" stroke="#959595"/><rect x="1" y="1" width="16" height="1" fill="#d8d8d8"/><rect x="4.5" y="2.5" width="7" height="8" rx="0.5" fill="#0b74da" stroke="#5aa6ee" stroke-width="0.6"/><rect x="2" y="3" width="1" height="1" fill="#8a8a8a"/><rect x="2" y="5" width="1" height="1" fill="#8a8a8a"/><rect x="2" y="7" width="1" height="1" fill="#8a8a8a"/><rect x="2" y="9" width="1" height="1" fill="#c0c0c0"/><rect x="12" y="3" width="4" height="2" fill="#a8a8a8"/><rect x="12" y="6" width="4" height="2" fill="#b8b8b8"/><rect x="12" y="9" width="4" height="1" fill="#e0e0e0"/></svg>
<div class="t" style="top:561px;left:78px;color:#000">TextInput...</div>
<div class="t" style="top:561px;left:151px;color:#000">8976</div>
<div class="t" style="top:561px;left:191px;color:#000">1136</div>
<div class="t" style="top:561px;left:236px;color:#000;letter-spacing:-0.35px">0xFFFF8C0A1E2B4080</div>
<div class="t" style="top:561px;right:353px;color:#000;text-align:right;letter-spacing:0.1px">MicrosoftWindows.Client.CBS_cw5n1h2txyewy\Inpu...</div>
<div class="t" style="top:561px;left:792px;color:#000">Microsoft Corporation</div>
<div class="t" style="top:561px;left:942px;color:#000;letter-spacing:0.3px">2026/03/10...</div>
<div class="t" style="top:561px;left:1017px;width:64px;text-align:center;color:#000">1</div>
<svg class="a" style="left:10px;top:585px" width="18" height="13" viewBox="0 0 18 13"><rect x="0.5" y="0.5" width="17" height="12" fill="#fbfbfb" stroke="#959595"/><rect x="1" y="1" width="16" height="1" fill="#d8d8d8"/><rect x="4.5" y="2.5" width="7" height="8" rx="0.5" fill="#0b74da" stroke="#5aa6ee" stroke-width="0.6"/><rect x="2" y="3" width="1" height="1" fill="#8a8a8a"/><rect x="2" y="5" width="1" height="1" fill="#8a8a8a"/><rect x="2" y="7" width="1" height="1" fill="#8a8a8a"/><rect x="2" y="9" width="1" height="1" fill="#c0c0c0"/><rect x="12" y="3" width="4" height="2" fill="#a8a8a8"/><rect x="12" y="6" width="4" height="2" fill="#b8b8b8"/><rect x="12" y="9" width="4" height="1" fill="#e0e0e0"/></svg>
<div class="t" style="top:582px;left:78px;color:#000">Application...</div>
<div class="t" style="top:582px;left:151px;color:#000">10...</div>
<div class="t" style="top:582px;left:191px;color:#000">1136</div>
<div class="t" style="top:582px;left:236px;color:#000;letter-spacing:-0.35px">0xFFFF8C0A1E2B4080</div>
<div class="t" style="top:582px;right:500px;color:#000;text-align:right;letter-spacing:0.1px">C:\Windows\System32\ApplicationFrameHost.exe</div>
<div class="t" style="top:582px;left:792px;color:#000">Microsoft Corporation</div>
<div class="t" style="top:582px;left:942px;color:#000;letter-spacing:0.3px">2026/03/10...</div>
<div class="t" style="top:582px;left:1017px;width:64px;text-align:center;color:#000">1</div>
<svg class="a" style="left:10px;top:603px" width="18" height="21" viewBox="0 0 18 21"><rect x="1.5" y="3.5" width="15" height="9" fill="none" stroke="#a0a0a0"/><rect x="3.5" y="5.5" width="4" height="5" fill="none" stroke="#a8a8a8"/><rect x="10.5" y="5.5" width="4" height="5" fill="none" stroke="#a8a8a8"/><rect x="8" y="1" width="2" height="19" fill="#fff"/><rect x="8.5" y="2" width="1" height="17" fill="#d0d0d0"/><rect x="8" y="1" width="2" height="1" fill="#909090"/><rect x="8" y="19" width="2" height="1" fill="#909090"/></svg>
<div class="t" style="top:603px;left:78px;color:#000">ChsIME.exe</div>
<div class="t" style="top:603px;left:151px;color:#000">13...</div>
<div class="t" style="top:603px;left:191px;color:#000">1136</div>
<div class="t" style="top:603px;left:236px;color:#000;letter-spacing:-0.35px">0xFFFF8C0A1E2B4080</div>
<div class="t" style="top:603px;right:478px;color:#000;text-align:right;letter-spacing:0.1px">C:\Windows\System32\InputMethod\CHS\ChsIME.exe</div>
<div class="t" style="top:603px;left:792px;color:#000">Microsoft Corporation</div>
<div class="t" style="top:603px;left:942px;color:#000;letter-spacing:0.3px">2026/03/10...</div>
<div class="t" style="top:603px;left:1017px;width:64px;text-align:center;color:#000">1</div>
<svg class="a" style="left:10px;top:627px" width="18" height="13" viewBox="0 0 18 13"><rect x="0.5" y="0.5" width="17" height="12" fill="#fbfbfb" stroke="#959595"/><rect x="1" y="1" width="16" height="1" fill="#d8d8d8"/><rect x="4.5" y="2.5" width="7" height="8" rx="0.5" fill="#0b74da" stroke="#5aa6ee" stroke-width="0.6"/><rect x="2" y="3" width="1" height="1" fill="#8a8a8a"/><rect x="2" y="5" width="1" height="1" fill="#8a8a8a"/><rect x="2" y="7" width="1" height="1" fill="#8a8a8a"/><rect x="2" y="9" width="1" height="1" fill="#c0c0c0"/><rect x="12" y="3" width="4" height="2" fill="#a8a8a8"/><rect x="12" y="6" width="4" height="2" fill="#b8b8b8"/><rect x="12" y="9" width="4" height="1" fill="#e0e0e0"/></svg>
<div class="t" style="top:624px;left:78px;color:#000">CompPkgS...</div>
<div class="t" style="top:624px;left:151px;color:#000">15...</div>
<div class="t" style="top:624px;left:191px;color:#000">1136</div>
<div class="t" style="top:624px;left:236px;color:#000;letter-spacing:-0.35px">0xFFFF8C0A1E2B4080</div>
<div class="t" style="top:624px;left:792px;color:#000">Microsoft Corporation</div>
<div class="t" style="top:624px;left:942px;color:#000;letter-spacing:0.3px">2026/03/10...</div>
<div class="t" style="top:624px;left:1017px;width:64px;text-align:center;color:#000">1</div>
<svg class="a" style="left:10px;top:648px" width="18" height="13" viewBox="0 0 18 13"><rect x="0.5" y="0.5" width="17" height="12" fill="#fbfbfb" stroke="#959595"/><rect x="1" y="1" width="16" height="1" fill="#d8d8d8"/><rect x="4.5" y="2.5" width="7" height="8" rx="0.5" fill="#0b74da" stroke="#5aa6ee" stroke-width="0.6"/><rect x="2" y="3" width="1" height="1" fill="#8a8a8a"/><rect x="2" y="5" width="1" height="1" fill="#8a8a8a"/><rect x="2" y="7" width="1" height="1" fill="#8a8a8a"/><rect x="2" y="9" width="1" height="1" fill="#c0c0c0"/><rect x="12" y="3" width="4" height="2" fill="#a8a8a8"/><rect x="12" y="6" width="4" height="2" fill="#b8b8b8"/><rect x="12" y="9" width="4" height="1" fill="#e0e0e0"/></svg>
<div class="t" style="top:645px;left:78px;color:#000">smartscre...</div>
<div class="t" style="top:645px;left:151px;color:#000">25...</div>
<div class="t" style="top:645px;left:191px;color:#000">1136</div>
<div class="t" style="top:645px;left:236px;color:#000;letter-spacing:-0.35px">0xFFFF8C0A1E2B4080</div>
<div class="t" style="top:645px;left:792px;color:#000">Microsoft Corporation</div>
<div class="t" style="top:645px;left:942px;color:#000;letter-spacing:0.3px">2026/03/11...</div>
<div class="t" style="top:645px;left:1017px;width:64px;text-align:center;color:#000">1</div>
<svg class="a" style="left:10px;top:669px" width="18" height="13" viewBox="0 0 18 13"><rect x="0.5" y="0.5" width="17" height="12" fill="#fbfbfb" stroke="#959595"/><rect x="1" y="1" width="16" height="1" fill="#d8d8d8"/><rect x="4.5" y="2.5" width="7" height="8" rx="0.5" fill="#0b74da" stroke="#5aa6ee" stroke-width="0.6"/><rect x="2" y="3" width="1" height="1" fill="#8a8a8a"/><rect x="2" y="5" width="1" height="1" fill="#8a8a8a"/><rect x="2" y="7" width="1" height="1" fill="#8a8a8a"/><rect x="2" y="9" width="1" height="1" fill="#c0c0c0"/><rect x="12" y="3" width="4" height="2" fill="#a8a8a8"/><rect x="12" y="6" width="4" height="2" fill="#b8b8b8"/><rect x="12" y="9" width="4" height="1" fill="#e0e0e0"/></svg>
<div class="t" style="top:666px;left:63px;color:#000">svchost.exe</div>
<div class="t" style="top:666px;left:151px;color:#000">1152</div>
<div class="t" style="top:666px;left:191px;color:#000">468</div>
<div class="t" style="top:666px;left:236px;color:#000;letter-spacing:-0.35px">0xFFFF8C0A1E2B4080</div>
<div class="t" style="top:666px;left:792px;color:#000">Microsoft Corporation</div>
<div class="t" style="top:666px;left:942px;color:#000;letter-spacing:0.3px">2026/03/10...</div>
<div class="t" style="top:666px;left:1017px;width:64px;text-align:center;color:#000">0</div>
<svg class="a" style="left:10px;top:690px" width="18" height="13" viewBox="0 0 18 13"><rect x="0.5" y="0.5" width="17" height="12" fill="#fbfbfb" stroke="#959595"/><rect x="1" y="1" width="16" height="1" fill="#d8d8d8"/><rect x="4.5" y="2.5" width="7" height="8" rx="0.5" fill="#0b74da" stroke="#5aa6ee" stroke-width="0.6"/><rect x="2" y="3" width="1" height="1" fill="#8a8a8a"/><rect x="2" y="5" width="1" height="1" fill="#8a8a8a"/><rect x="2" y="7" width="1" height="1" fill="#8a8a8a"/><rect x="2" y="9" width="1" height="1" fill="#c0c0c0"/><rect x="12" y="3" width="4" height="2" fill="#a8a8a8"/><rect x="12" y="6" width="4" height="2" fill="#b8b8b8"/><rect x="12" y="9" width="4" height="1" fill="#e0e0e0"/></svg>
<div class="t" style="top:687px;left:63px;color:#000">svchost.exe</div>
<div class="t" style="top:687px;left:151px;color:#000">1248</div>
<div class="t" style="top:687px;left:191px;color:#000">468</div>
<div class="t" style="top:687px;left:236px;color:#000;letter-spacing:-0.35px">0xFFFF8C0A1E2B4080</div>
<div class="t" style="top:687px;left:792px;color:#000">Microsoft Corporation</div>
<div class="t" style="top:687px;left:942px;color:#000;letter-spacing:0.3px">2026/03/10...</div>
<div class="t" style="top:687px;left:1017px;width:64px;text-align:center;color:#000">0</div>
<div class="a" style="left:1109px;top:54px;width:16px;height:656px;background:#f0f0f0"></div>
<div class="a" style="left:1109px;top:71px;width:15px;height:78px;background:#cdcdcd"></div>
<svg class="a" style="left:1109px;top:54px" width="17" height="17" viewBox="0 0 17 17"><path d="M4.6 11.3L7.8 7.6L11 11.3" stroke="#505050" stroke-width="2" fill="none"/></svg>
<svg class="a" style="left:1109px;top:693px" width="17" height="17" viewBox="0 0 17 17"><path d="M4.6 6.2L7.8 9.9L11 6.2" stroke="#505050" stroke-width="2" fill="none"/></svg>
<div class="a" style="left:1px;top:711px;width:1129px;height:1px;background:#dadada"></div>
<div class="a" style="left:1px;top:712px;width:1129px;height:21px;background:#f0f0f0"></div>
<div class="a" style="left:1126px;top:723px;width:2px;height:2px;background:#a0a0a0"></div>
<div class="a" style="left:1123px;top:726px;width:2px;height:2px;background:#a0a0a0"></div>
<div class="a" style="left:1126px;top:726px;width:2px;height:2px;background:#a0a0a0"></div>
<div class="a" style="left:1120px;top:729px;width:2px;height:2px;background:#a0a0a0"></div>
<div class="a" style="left:1123px;top:729px;width:2px;height:2px;background:#a0a0a0"></div>
<div class="a" style="left:1126px;top:729px;width:2px;height:2px;background:#a0a0a0"></div>
<div class="a" style="left:4px;top:714px;font-size:12px;line-height:18px;white-space:nowrap"><span style="letter-spacing:0.45px">code 103, message error:31 </span><span class="cj">连到系统上的设备没有发挥作用。</span></div>
<div class="a" style="left:909px;top:712px;width:1px;height:21px;background:#d7d7d7"></div>
<div class="a" style="left:914px;top:714px;font-size:12px;line-height:18px;white-space:nowrap"><span class="cj">系统版本</span><span style="letter-spacing:0px"> :19043</span></div>
<div class="a" style="left:624px;top:89px;width:4px;height:651px;background:linear-gradient(90deg,rgba(0,0,0,0.35),rgba(0,0,0,0))"></div>
<div class="a" style="left:278px;top:83px;width:346px;height:653px;background:#f0f0f0;border:1px solid #cccccc;border-right-color:#e8e8e8;border-top-color:#f8f8f8"></div>
<div class="mi" style="top:86px"><span class="cj">刷新</span></div>
<div class="a" style="left:285px;top:89px;width:16px;height:16px;background:#fff"></div>
<svg class="a" style="left:285px;top:89px" width="16" height="17" viewBox="0 0 16 17"><defs><linearGradient id="rf" x1="0" y1="0" x2="1" y2="1"><stop offset="0" stop-color="#f4f8fd"/><stop offset="1" stop-color="#a9c8ef"/></linearGradient></defs><path d="M2.5 1.5H11L14.5 5V15.5H2.5Z" fill="url(#rf)" stroke="#4b5ca6"/><path d="M11 1.5V5H14.5Z" fill="#5b8be0" stroke="#4b5ca6" stroke-width="0.8"/><path d="M4.6 8.2C4.8 5.6 7.4 4.6 9.6 5.6L10.4 4.4L11.6 8L8 8.4L8.9 7.1C7.6 6.5 6.3 7.1 6.2 8.2Z" fill="#0f8f0f"/><path d="M11.4 9.6C11.2 12.2 8.6 13.2 6.4 12.2L5.6 13.4L4.4 9.8L8 9.4L7.1 10.7C8.4 11.3 9.7 10.7 9.8 9.6Z" fill="#0f8f0f"/></svg>
<div class="ms" style="top:111px"></div>
<div class="mi" style="top:115px"><span class="cj">查看进程信息</span></div>
<div class="mi" style="top:137px"><span class="cj">查看模块</span></div>
<div class="mi" style="top:159px"><span class="cj">查看线程</span></div>
<div class="mi" style="top:181px"><span class="cj">查看句柄</span></div>
<div class="mi" style="top:203px"><span class="cj">查看内存</span></div>
<div class="ms" style="top:228px"></div>
<div class="mi" style="top:232px"><span class="cj">结束进程</span></div>
<div class="a" style="left:285px;top:235px;width:16px;height:16px;background:#fff"></div>
<svg class="a" style="left:285px;top:235px" width="16" height="16" viewBox="0 0 16 16"><path d="M2.5 2.5L14 14M13.5 2.5L2.5 14" stroke="#555" stroke-opacity="0.5" stroke-width="2.2" transform="translate(0.7,0.7)"/><path d="M1.8 1.8L13.6 13.6M13.2 2.6L1.8 13.6" stroke="#e2133c" stroke-width="2" stroke-linecap="round"/></svg>
<div class="mi" style="top:254px"><span class="cj">强制结束进程</span><span style="letter-spacing:0.3px">(ZwTerminateProcess)</span></div>
<div class="a" style="left:285px;top:257px;width:16px;height:16px;background:#fff"></div>
<svg class="a" style="left:285px;top:257px" width="16" height="16" viewBox="0 0 16 16"><path d="M2.5 2.5L14 14M13.5 2.5L2.5 14" stroke="#555" stroke-opacity="0.5" stroke-width="2.2" transform="translate(0.7,0.7)"/><path d="M1.8 1.8L13.6 13.6M13.2 2.6L1.8 13.6" stroke="#e2133c" stroke-width="2" stroke-linecap="round"/></svg>
<div class="mi" style="top:276px"><span class="cj">强制结束进程</span><span style="letter-spacing:0.3px">(PspTerminateThreadByPointer)</span></div>
<div class="a" style="left:285px;top:279px;width:16px;height:16px;background:#fff"></div>
<svg class="a" style="left:285px;top:279px" width="16" height="16" viewBox="0 0 16 16"><path d="M2.5 2.5L14 14M13.5 2.5L2.5 14" stroke="#555" stroke-opacity="0.5" stroke-width="2.2" transform="translate(0.7,0.7)"/><path d="M1.8 1.8L13.6 13.6M13.2 2.6L1.8 13.6" stroke="#e2133c" stroke-width="2" stroke-linecap="round"/></svg>
<div class="mi" style="top:298px"><span class="cj">强制结束进程</span><span style="letter-spacing:0.3px">(MemoryZero)</span></div>
<div class="a" style="left:285px;top:301px;width:16px;height:16px;background:#fff"></div>
<svg class="a" style="left:285px;top:301px" width="16" height="16" viewBox="0 0 16 16"><path d="M2.5 2.5L14 14M13.5 2.5L2.5 14" stroke="#555" stroke-opacity="0.5" stroke-width="2.2" transform="translate(0.7,0.7)"/><path d="M1.8 1.8L13.6 13.6M13.2 2.6L1.8 13.6" stroke="#e2133c" stroke-width="2" stroke-linecap="round"/></svg>
<div class="mi" style="top:320px"><span style="letter-spacing:0.3px">PsTerminateProcess</span><span class="cj">结束进程</span></div>
<div class="a" style="left:285px;top:323px;width:16px;height:16px;background:#fff"></div>
<svg class="a" style="left:285px;top:323px" width="16" height="16" viewBox="0 0 16 16"><path d="M2.5 2.5L14 14M13.5 2.5L2.5 14" stroke="#555" stroke-opacity="0.5" stroke-width="2.2" transform="translate(0.7,0.7)"/><path d="M1.8 1.8L13.6 13.6M13.2 2.6L1.8 13.6" stroke="#e2133c" stroke-width="2" stroke-linecap="round"/></svg>
<div class="mi" style="top:342px"><span class="cj">结束进程后删除文件</span></div>
<div class="a" style="left:285px;top:345px;width:16px;height:16px;background:#fff"></div>
<svg class="a" style="left:285px;top:345px" width="16" height="16" viewBox="0 0 16 16"><path d="M2.5 2.5L14 14M13.5 2.5L2.5 14" stroke="#555" stroke-opacity="0.5" stroke-width="2.2" transform="translate(0.7,0.7)"/><path d="M1.8 1.8L13.6 13.6M13.2 2.6L1.8 13.6" stroke="#e2133c" stroke-width="2" stroke-linecap="round"/></svg>
<div class="ms" style="top:367px"></div>
<div class="mi" style="top:371px"><span class="cj">添加到阻止进程列表</span></div>
<div class="mi" style="top:393px"><span class="cj">恢复阻止进程</span></div>
<div class="ms" style="top:418px"></div>
<div class="mi" style="top:422px"><span class="cj">功能</span></div>
<svg class="a" style="left:604px;top:428px" width="10" height="10" viewBox="0 0 10 10"><path d="M3.5 1.5L7 5L3.5 8.5" stroke="#333" stroke-width="1.3" fill="none"/></svg>
<div class="ms" style="top:447px"></div>
<div class="mi" style="top:451px"><span class="cj">复制</span></div>
<svg class="a" style="left:604px;top:457px" width="10" height="10" viewBox="0 0 10 10"><path d="M3.5 1.5L7 5L3.5 8.5" stroke="#333" stroke-width="1.3" fill="none"/></svg>
<div class="ms" style="top:476px"></div>
<div class="mi" style="top:480px"><span class="cj">检验当前进程数字签名</span></div>
<div class="mi" style="top:502px"><span class="cj">检验全部进程数字签名</span></div>
<div class="ms" style="top:527px"></div>
<div class="mi" style="top:531px"><span class="cj">挂起进程</span></div>
<div class="mi" style="top:553px"><span class="cj">恢复挂起</span></div>
<div class="ms" style="top:578px"></div>
<div class="mi" style="top:582px"><span class="cj">定位到文件</span></div>
<svg class="a" style="left:285px;top:585px" width="16" height="16" viewBox="0 0 16 16"><rect x="0" y="0" width="16" height="16" fill="#fff"/><path d="M0 1H6.5L8 2.5V4H0Z" fill="#e0a20c"/><rect x="0" y="3" width="16" height="12" fill="#fdd469"/><rect x="0" y="3" width="16" height="1" fill="#f2bd3a"/><path d="M3 15V8H13V15H10V10.5H6V15Z" fill="#2b8ae2"/></svg>
<div class="mi" style="top:604px"><span class="cj">查看文件属性</span></div>
<svg class="a" style="left:285px;top:607px" width="16" height="16" viewBox="0 0 16 16"><rect x="0" y="0" width="16" height="16" fill="#fff"/><path d="M0 1H6.5L8 2.5V4H0Z" fill="#e0a20c"/><rect x="0" y="3" width="16" height="12" fill="#fdd469"/><rect x="0" y="3" width="16" height="1" fill="#f2bd3a"/><path d="M3 15V8H13V15H10V10.5H6V15Z" fill="#2b8ae2"/></svg>
<div class="ms" style="top:629px"></div>
<div class="mi" style="top:633px"><span class="cj">定位到</span><span style="letter-spacing:0.3px">Kernel64</span><span class="cj">文件管理器</span></div>
<div class="a" style="left:284px;top:636px;width:17px;height:17px;background:radial-gradient(circle at 50% 47%,#000 0,#000 2.2px,rgba(0,0,0,0.6) 3.5px,rgba(0,0,0,0) 5px),radial-gradient(circle at 75% 22%,rgba(80,160,220,0.7) 0,rgba(80,160,220,0) 2.5px),radial-gradient(circle at 30% 40%,rgba(70,140,200,0.5) 0,rgba(70,140,200,0) 3px),radial-gradient(circle at 55% 85%,rgba(80,160,220,0.6) 0,rgba(80,160,220,0) 3px),radial-gradient(circle at 20% 80%,rgba(0,10,25,0.6) 0,rgba(0,10,25,0) 4px),radial-gradient(circle at 50% 50%,#1d5a85 0,#174b70 6px,#0c2c45 11px)"></div>
<div class="ms" style="top:659px"></div>
<div class="ms" style="top:666px"></div>
<div class="mi" style="top:670px"><span class="cj">计算</span><span style="letter-spacing:0.3px">MD5</span></div>
<div class="mi" style="top:692px"><span class="cj">计算</span><span style="letter-spacing:0.3px">SHA256</span></div>
<div class="ms" style="top:717px"></div>
<div class="mi" style="top:721px"><span style="letter-spacing:0.3px">HexDump</span></div>
</body></html>
